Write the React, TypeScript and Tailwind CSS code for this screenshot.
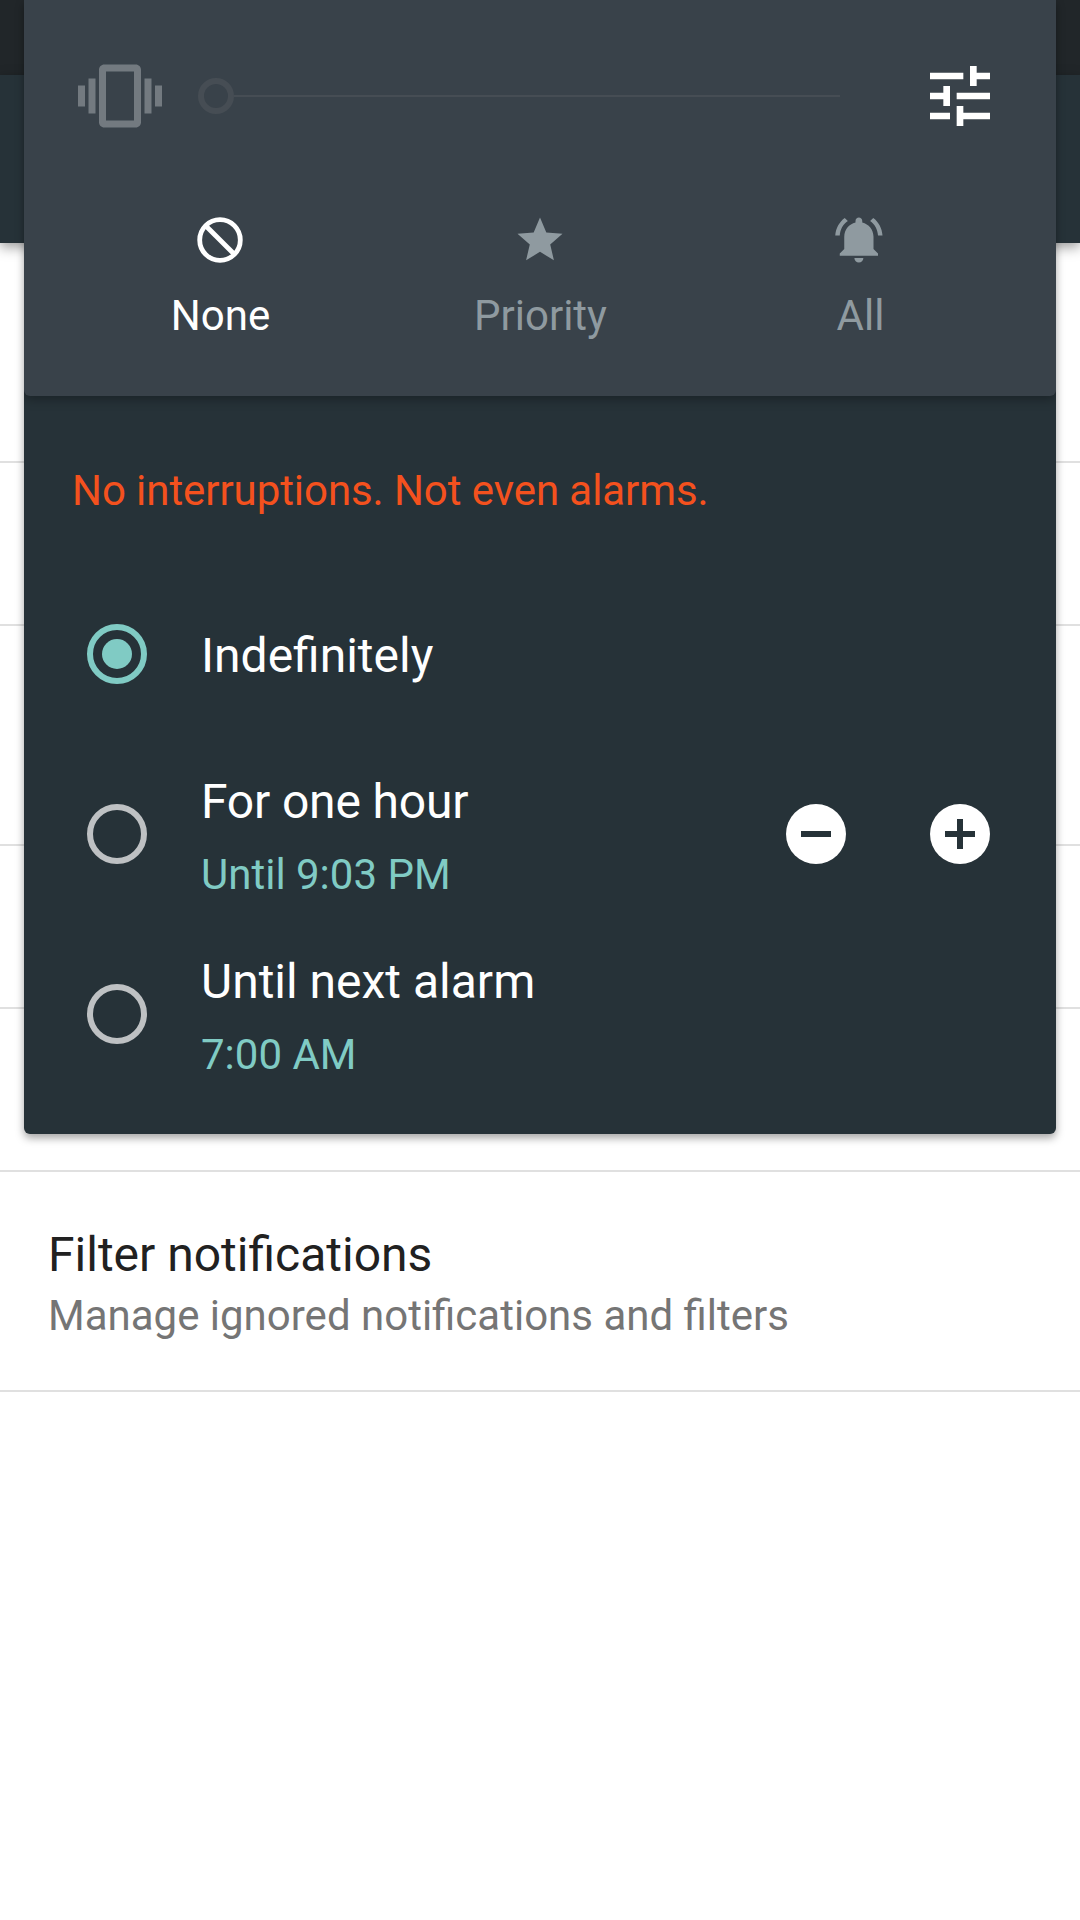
import type { ReactNode } from "react";

const text42 = "text-[42px] leading-[50px]";
const text48 = "text-[48px] leading-[56px]";

function Mode({ label, active, children }: { label: string; active?: boolean; children: ReactNode }) {
  return (
    <div className={"flex w-[320px] flex-col items-center " + (active ? "text-white" : "text-[#8f9aa0]")}>
      <div className="h-[54px] w-[54px]">{children}</div>
      <div className={"mt-[24px] pl-px " + text42}>{label}</div>
    </div>
  );
}

function Radio({ checked }: { checked?: boolean }) {
  return (
    <div
      className={
        "flex h-[60px] w-[60px] shrink-0 items-center justify-center rounded-full border-[6px] " +
        (checked ? "border-[#80cbc4]" : "border-[#bec1c3]")
      }
    >
      {checked && <div className="h-[30px] w-[30px] rounded-full bg-[#80cbc4]" />}
    </div>
  );
}

type ConditionProps = {
  title: string;
  sub?: string;
  checked?: boolean;
  tracking?: string;
  children?: ReactNode;
};

function Condition({ title, sub, checked, tracking = "", children }: ConditionProps) {
  return (
    <div className="flex h-[180px] items-center pl-[63px] pr-[66px]">
      <Radio checked={checked} />
      <div className={"ml-[54px] flex-1 " + (sub ? "pt-[6px]" : "pt-[4px]")}>
        <div className={"text-white " + text48 + " " + tracking}>{title}</div>
        {sub && <div className={"mt-[20px] text-[#80cbc4] " + text42}>{sub}</div>}
      </div>
      {children}
    </div>
  );
}

function RoundButton({ plus }: { plus?: boolean }) {
  return (
    <button className="h-[60px] w-[60px] rounded-full bg-white">
      <svg viewBox="0 0 60 60" className="h-[60px] w-[60px]" fill="#263238">
        <rect x="15" y="27" width="30" height="6" />
        {plus && <rect x="27" y="15" width="6" height="30" />}
      </svg>
    </button>
  );
}

function VolumePanel() {
  return (
    <div className="absolute left-[24px] top-0 h-[1134px] w-[1032px] rounded-b-[6px] bg-[#263238] shadow-[0_4px_9px_rgba(0,0,0,0.36)]">
      <div className="overflow-hidden">
        <div className="mb-[16px] h-[396px] rounded-b-[6px] bg-[#39424a] shadow-[0_3px_12px_rgba(0,0,0,0.32)]">
          <div className="flex h-[192px] items-center pl-[54px] pr-[56px]">
            <svg viewBox="0 0 24 24" className="h-[84px] w-[84px]" fill="#737a80">
              <path d="M0 15h2V9H0v6zm3 2h2V7H3v10zm19-8v6h2V9h-2zm-3 8h2V7h-2v10zM16.5 3h-9C6.67 3 6 3.67 6 4.5v15c0 .83.67 1.5 1.5 1.5h9c.83 0 1.5-.67 1.5-1.5v-15c0-.83-.67-1.5-1.5-1.5zM16 19H8V5h8v14z" />
            </svg>
            <div className="ml-[36px] flex w-[642px] items-center">
              <div className="h-[36px] w-[36px] rounded-full border-[6px] border-[#464d54]" />
              <div className="h-[2px] flex-1 bg-[#464d54]" />
            </div>
            <svg viewBox="0 0 24 24" className="ml-auto h-[80px] w-[80px]" fill="#fff">
              <path d="M3 17v2h6v-2H3zM3 5v2h10V5H3zm10 16v-2h8v-2h-8v-2h-2v6h2zM7 9v2H3v2h4v2h2V9H7zm14 4v-2H11v2h10zm-6-4h2V7h4V5h-4V3h-2v6z" />
            </svg>
          </div>
          <div className="flex justify-center pt-[21px]">
            <Mode label="None" active>
              <svg viewBox="0 0 54 54" className="h-full w-full" fill="none" stroke="currentColor" strokeWidth="4.8">
                <circle cx="27" cy="27" r="20.3" />
                <path d="M12.7 12.7L41.3 41.3" />
              </svg>
            </Mode>
            <Mode label="Priority">
              <svg viewBox="0 0 24 24" className="h-full w-full" fill="currentColor">
                <path d="M12 17.27L18.18 21l-1.64-7.03L22 9.24l-7.19-.61L12 2 9.19 8.63 2 9.24l5.46 4.73L5.82 21z" />
              </svg>
            </Mode>
            <Mode label="All">
              <svg viewBox="0 0 24 24" className="h-full w-full" fill="currentColor">
                <path d="M6.6 3.6L5.2 2.2C2.8 4 1.2 6.8 1 10h2c.2-2.7 1.5-5 3.6-6.4zM20 10h2c-.2-3.2-1.7-6-4.1-7.8l-1.4 1.4c2 1.4 3.3 3.7 3.5 6.4zm-2 .5c0-3.1-2.1-5.6-5-6.3v-.7c0-.8-.7-1.5-1.5-1.5S10 2.7 10 3.5v.7c-2.9.7-5 3.2-5 6.3V16l-2 2v1h17v-1l-2-2v-5.5zM11.5 22c1.1 0 2-.9 2-2h-4c0 1.1.9 2 2 2z" />
              </svg>
            </Mode>
          </div>
        </div>
      </div>
      <div className={"pl-[48px] pt-[54px] tracking-[-0.07px] text-[#f4511e] " + text42}>
        No interruptions. Not even alarms.
      </div>
      <div className="pt-[48px]">
        <Condition title="Indefinitely" checked />
        <Condition title="For one hour" sub="Until 9:03 PM" tracking="tracking-[-0.17px]">
          <div className="flex gap-[84px]">
            <RoundButton />
            <RoundButton plus />
          </div>
        </Condition>
        <Condition title="Until next alarm" sub="7:00 AM" />
      </div>
    </div>
  );
}

export default function App() {
  return (
    <div className="relative h-[1920px] w-[1080px] overflow-hidden bg-white font-['Roboto',sans-serif]">
      <div className="h-[75px] bg-[#212629]" />
      <div className="h-[168px] bg-[#263238] shadow-[0_4px_12px_rgba(0,0,0,0.4)]" />
      <div className="h-[220px] border-b-2 border-[#e0e0e0]" />
      <div className="h-[163px] border-b-2 border-[#e0e0e0]" />
      <div className="h-[220px] border-b-2 border-[#e0e0e0]" />
      <div className="h-[163px] border-b-2 border-[#e0e0e0]" />
      <div className="h-[163px] border-b-2 border-[#e0e0e0]" />
      <div className="h-[220px] border-b-2 border-[#e0e0e0] pl-[48px] pt-[55px]">
        <div className={"text-[#212121] " + text48}>Filter notifications</div>
        <div className={"mt-[8px] text-[#757575] " + text42}>Manage ignored notifications and filters</div>
      </div>
      <VolumePanel />
    </div>
  );
}
